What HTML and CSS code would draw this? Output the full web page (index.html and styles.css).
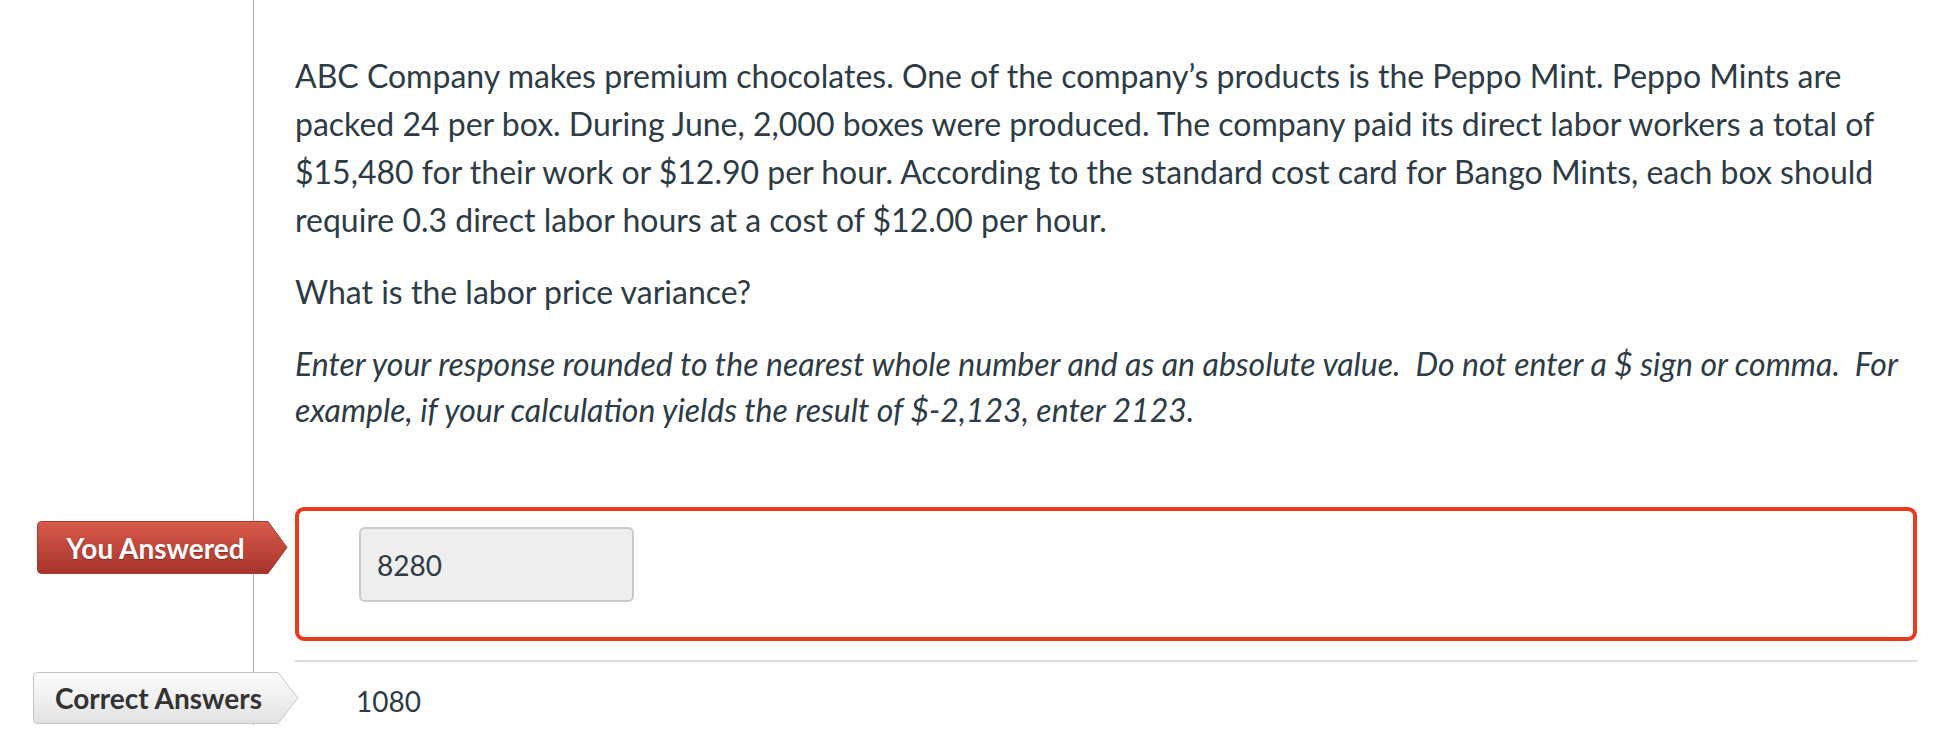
FILE: index.html
```html
<!DOCTYPE html>
<html lang="en">
<head>
<meta charset="utf-8">
<title>Quiz question</title>
<link rel="stylesheet" href="styles.css">
</head>
<body>
<div class="quiz">
  <div class="row question">
    <div class="gutter"></div>
    <div class="content">
      <p class="text">ABC Company makes premium chocolates. One of the company’s products is the Peppo Mint. Peppo Mints are packed 24 per box. During June, 2,000 boxes were produced. The company paid its direct labor workers a total of $15,480 for their work or $12.90 per hour. According to the standard cost card for Bango Mints, each box should require 0.3 direct labor hours at a cost of $12.00 per hour.</p>
      <p class="text">What is the labor price variance?</p>
      <p class="text hint"><em>Enter your response rounded to the nearest whole number and as an absolute value.&nbsp; Do not enter a $ sign or comma.&nbsp; For example, if your calculation yields the result of $-2,123, enter 2123.</em></p>
    </div>
  </div>

  <div class="row answer">
    <div class="gutter">
      <div class="tag tag-wrong">
        <svg class="tag-shape" width="251" height="53" viewBox="0 0 251 53" aria-hidden="true">
          <defs>
            <linearGradient id="gWrong" x1="0" y1="0" x2="0" y2="1">
              <stop offset="0" stop-color="#d85b4c"/>
              <stop offset="1" stop-color="#a6342a"/>
            </linearGradient>
          </defs>
          <path d="M4.5 0.5 H231 L250 26.5 L231 52.5 H4.5 Q0.5 52.5 0.5 48.5 V4.5 Q0.5 0.5 4.5 0.5 Z" fill="url(#gWrong)" stroke="#a93a30" stroke-width="1"/>
        </svg>
        <span class="tag-label">You Answered</span>
      </div>
    </div>
    <div class="content">
      <div class="answer-box">
        <div class="answer-input">8280</div>
      </div>
    </div>
  </div>

  <div class="row answer">
    <div class="gutter">
      <div class="tag tag-correct">
        <svg class="tag-shape" width="266" height="52" viewBox="0 0 266 52" aria-hidden="true">
          <defs>
            <linearGradient id="gRight" x1="0" y1="0" x2="0" y2="1">
              <stop offset="0" stop-color="#fdfdfd"/>
              <stop offset="1" stop-color="#e2e2e2"/>
            </linearGradient>
          </defs>
          <path d="M4.5 0.5 H245 L265 26 L245 51.5 H4.5 Q0.5 51.5 0.5 47.5 V4.5 Q0.5 0.5 4.5 0.5 Z" fill="url(#gRight)" stroke="#c6c6c6" stroke-width="1"/>
        </svg>
        <span class="tag-label">Correct Answers</span>
      </div>
    </div>
    <div class="content">
      <div class="correct-answer">
        <div class="correct-text">1080</div>
      </div>
    </div>
  </div>
</div>
</body>
</html>
```

FILE: styles.css
```css
* {
  box-sizing: border-box;
}

html, body {
  margin: 0;
  padding: 0;
  background: #ffffff;
}

body {
  font-family: Lato, "Open Sans", "Liberation Sans", sans-serif;
  color: #2d3b45;
  overflow: hidden;
}

.quiz {
  display: flex;
  flex-direction: column;
  width: 1944px;
}

.row {
  display: flex;
}

.gutter {
  position: relative;
  flex: 0 0 254px;
  width: 254px;
  border-right: 1px solid #a9a9a9;
}

.content {
  flex: 1 1 auto;
  padding-left: 41px;
  margin-right: 27px;
  min-width: 0;
}

/* question */
.question .content {
  padding-top: 52px;
  padding-bottom: 74px;
}

.text {
  margin: 0 0 24px;
  font-size: 32px;
  line-height: 48px;
}

.text.hint {
  margin: 25px 0 0;
  font-size: 32px;
  line-height: 46px;
}

/* answers */
.answer-box {
  border: 4px solid #e9391f;
  border-radius: 9px;
  padding: 16px 60px 35px;
}

.answer-input {
  width: 275px;
  height: 75px;
  background: #eeeeee;
  border: 2px solid #cacaca;
  border-radius: 6px;
  padding: 0 16px;
  font-size: 28px;
  line-height: 73px;
  color: #2d3b45;
}

.correct-answer {
  margin-top: 19px;
  border-top: 2px solid #dcdcdc;
  padding: 15px 0 0 61px;
}

.correct-text {
  font-size: 28px;
  line-height: 48px;
}

/* tags */
.tag {
  position: absolute;
  display: flex;
  align-items: center;
  justify-content: center;
  z-index: 2;
}

.tag-shape {
  position: absolute;
  left: 0;
  top: 0;
}

.tag-label {
  position: relative;
  font-weight: 700;
  font-size: 28px;
  line-height: 1;
  white-space: nowrap;
}

.tag-wrong {
  left: 37px;
  top: 14px;
  width: 251px;
  height: 53px;
  padding: 0 20px 0 6px;
}

.tag-wrong .tag-label {
  color: #ffffff;
  text-shadow: 0 1px 1px rgba(80, 10, 5, 0.45);
}

.tag-correct {
  left: 33px;
  top: 31px;
  width: 266px;
  height: 52px;
  padding: 0 21px 0 6px;
}

.tag-correct .tag-label {
  color: #333333;
}
```
